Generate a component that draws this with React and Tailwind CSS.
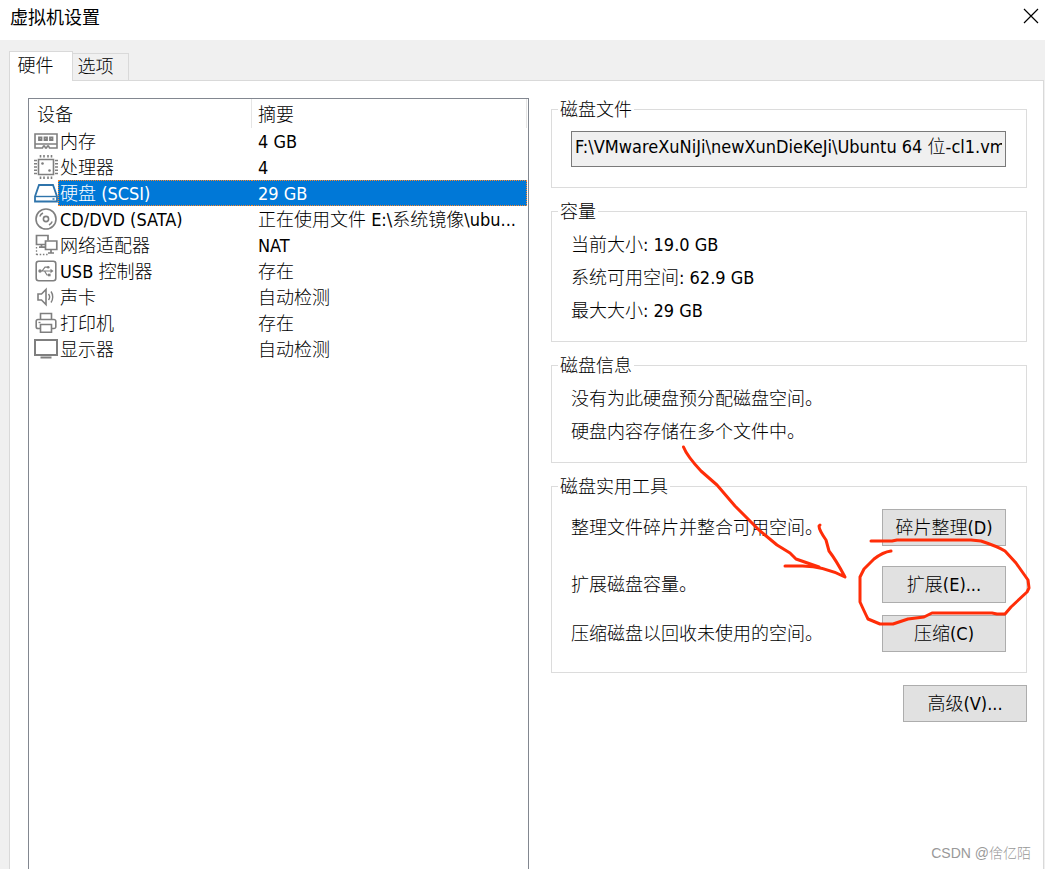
import React from 'react';

function DeviceIcon({ name }) {
  const icons = {
    memory: (
      <g stroke="#7f7f7f" strokeWidth="2">
        <path d="M1 5h22v14h-7.500l-1-2h-1l-1 2h-1l-1-2h-1l-1 2H1z" strokeWidth="1.600" />
        <path d="M1 15h22" strokeWidth="1.500" />
        <path d="M5 8.500h2.500V11H5zM10.500 8.500H13V11h-2.500zM16 8.500h2.500V11H16z" strokeWidth="1.800" />
      </g>
    ),
    cpu: (
      <g stroke="#7f7f7f">
        <path d="M4.500 4.500h15v15h-15z" strokeWidth="1.600" />
        <path d="M6.500 0v2.500M10 0v2.500M14 0v2.500M17.500 0v2.500M6.500 21.500V24M10 21.500V24M14 21.500V24M17.500 21.500V24" strokeWidth="1.600" />
        <path d="M0 5.500h3M0 8.800h3M0 12h3M0 15.200h3M0 18.500h3M21 5.500h3M21 8.800h3M21 12h3M21 15.200h3M21 18.500h3" strokeWidth="1.400" />
        <circle cx="8.500" cy="8.500" r="1.300" fill="#7f7f7f" stroke="none" />
        <circle cx="15.500" cy="15.500" r="1.300" fill="#7f7f7f" stroke="none" />
      </g>
    ),
    disk: (
      <g stroke="#2f74ab" strokeWidth="1.800">
        <path d="M5 4h14l4 11.500v5H1v-5z" />
        <path d="M1 15.500h22" strokeWidth="1.400" />
        <path d="M18.500 18h2" strokeWidth="1.500" />
      </g>
    ),
    disc: (
      <g stroke="#7f7f7f" strokeWidth="1.600">
        <circle cx="12" cy="12" r="10" />
        <circle cx="12" cy="12" r="2.600" />
        <path d="M5.800 9.500a6.600 6.600 0 0 1 3.200-3.500M18.200 14.500a6.600 6.600 0 0 1-3.200 3.500" strokeWidth="1.500" />
      </g>
    ),
    network: (
      <g stroke="#7f7f7f" strokeWidth="1.700">
        <path d="M11 11.500H2.500V2.500h11.500v5" />
        <path d="M7.500 11.500V14M5 14.200h6" />
        <path d="M11.500 8h11.300v8.500H11.500zM17 16.500v3M14 20h6" />
        <path d="M2.500 14v8M2.500 21.500H15" strokeWidth="1.300" strokeDasharray="1.500 1.700" />
      </g>
    ),
    usb: (
      <g stroke="#7f7f7f" strokeWidth="1.600">
        <rect x="2.200" y="2.200" width="19.600" height="19.600" rx="2.500" />
        <path d="M5.500 12H17M8 12l3-3.800h2.500M10.500 12l2.500 4h2" strokeWidth="1.200" />
        <path d="M16.500 9.800l3 2.200-3 2.200z" fill="#7f7f7f" stroke="none" />
        <circle cx="6" cy="12" r="1.700" fill="#7f7f7f" stroke="none" />
        <circle cx="14.200" cy="8.200" r="1.300" fill="#7f7f7f" stroke="none" />
        <path d="M14 14.700h2.600v2.600H14z" fill="#7f7f7f" stroke="none" />
      </g>
    ),
    sound: (
      <g stroke="#7f7f7f" strokeWidth="1.600">
        <path d="M4 9h3.500L12 4.500v15L7.500 15H4z" />
        <path d="M14.500 9c1.300 1.700 1.300 4.300 0 6M17 6.500c2.300 3 2.300 8 0 11" strokeWidth="1.400" />
      </g>
    ),
    printer: (
      <g stroke="#7f7f7f" strokeWidth="1.600">
        <path d="M6.500 8.500v-6h11v6" />
        <path d="M6.500 17.500H4a1.800 1.800 0 0 1-1.800-1.800v-5.400A1.800 1.800 0 0 1 4 8.500h16a1.800 1.800 0 0 1 1.800 1.800v5.400a1.800 1.800 0 0 1-1.800 1.800h-2.500" />
        <path d="M6.500 13.500h11v7.700h-11z" />
        <path d="M4.500 11.500h2" strokeWidth="1.300" />
      </g>
    ),
    display: (
      <g stroke="#7f7f7f" strokeWidth="2">
        <path d="M1 3h22v15H1z" />
        <path d="M6.500 20.500h11" />
      </g>
    ),
  };

  return (
    <svg viewBox="0 0 24 24" className="ml-[5px] block h-6 w-6" fill="none" aria-hidden="true">
      {icons[name]}
    </svg>
  );
}

const devices = [
  { icon: 'memory', name: '内存', summary: '4 GB' },
  { icon: 'cpu', name: '处理器', summary: '4' },
  { icon: 'disk', name: '硬盘 (SCSI)', summary: '29 GB', selected: true },
  { icon: 'disc', name: 'CD/DVD (SATA)', summary: '正在使用文件 E:\\系统镜像\\ubu...' },
  { icon: 'network', name: '网络适配器', summary: 'NAT' },
  { icon: 'usb', name: 'USB 控制器', summary: '存在' },
  { icon: 'sound', name: '声卡', summary: '自动检测' },
  { icon: 'printer', name: '打印机', summary: '存在' },
  { icon: 'display', name: '显示器', summary: '自动检测' },
];

function DeviceList() {
  return (
    <div className="mt-px min-w-0 flex-[500] border border-b-0 border-[#828790] pr-px">
      <table className="w-full table-fixed border-separate border-spacing-0 text-left leading-[22px]">
        <colgroup>
          <col className="w-[29px]" />
          <col className="w-[194px]" />
          <col />
        </colgroup>
        <thead>
          <tr className="h-[29px]">
            <th colSpan={2} className="border-r border-[#e5e5e5] pt-[3px] pl-2 font-light">设备</th>
            <th className="border-r border-[#e5e5e5] pt-[3px] pl-[6px] font-light">摘要</th>
          </tr>
        </thead>
        <tbody>
          {devices.map((d) => (
            <tr key={d.name} className="h-[26px] whitespace-nowrap" aria-selected={!!d.selected}>
              <td>
                <DeviceIcon name={d.icon} />
              </td>
              <td className={d.selected ? 'border-y border-l border-dotted border-[#ff8728] bg-[#0078d7] pt-[2px] pl-px text-white' : 'pt-[2px] pl-[2px]'}>
                {d.name}
              </td>
              <td className={d.selected ? 'border-y border-r border-dotted border-[#ff8728] bg-[#0078d7] pt-[2px] pl-[6px] text-white' : 'pt-[2px] pl-[6px]'}>
                {d.summary}
              </td>
            </tr>
          ))}
        </tbody>
      </table>
    </div>
  );
}

function Group({ title, className, children }) {
  return (
    <fieldset className={`border border-[#dcdcdc] pr-5 pl-[19px] ${className}`}>
      <legend className="-ml-[13px] px-[2px] pt-[2px] leading-[22px]">{title}</legend>
      {children}
    </fieldset>
  );
}

function PushButton({ children, ...props }) {
  return (
    <button
      type="button"
      className="h-[37px] w-[124px] shrink-0 border border-[#adadad] bg-[#e1e1e1] hover:border-[#0078d7] hover:bg-[#e5f1fb]"
      {...props}
    >
      {children}
    </button>
  );
}

// hand-drawn arrow and circle around the expand button
function Markup() {
  return (
    <svg
      viewBox="680 440 355 190"
      className="pointer-events-none absolute -top-[58px] -right-2 h-[190px] w-[355px]"
      fill="none"
      stroke="#ff2d08"
      strokeWidth="3"
      strokeLinecap="round"
      strokeLinejoin="round"
      aria-hidden="true"
    >
      <path d="M684.500 447Q688 456 702 471L718 485L736 506L760 530L778 545L791 553L797 559L820 567" />
      <path d="M786 566H800Q823 565 846 577Q837 560 830 551L827 540Q820 530 820 526L821 525" />
      <path d="M872 541H893L898 540H972L982 541Q1000 547 1006 551L1017 563L1029 580L1030 588L1028 592L1012 607L1006 614H998L993 613H933L925 617L909 619L894 624H881L869 619Q866 613 861 602V577L865 569L875 559Q884 552 892 551" />
    </svg>
  );
}

export default function App() {
  return (
    <div className="flex min-h-screen flex-col bg-[#f0f0f0] font-['DejaVu_Sans_Condensed','Noto_Sans_CJK_SC',sans-serif] text-[18px] leading-6 font-light text-black">
      <header className="flex h-10 shrink-0 items-center justify-between bg-white pr-1 pb-2 pl-[10px]">
        <h1 className="font-['Noto_Sans_CJK_SC',sans-serif] font-normal">虚拟机设置</h1>
        <button type="button" aria-label="关闭" className="flex h-5 w-5 items-center justify-center">
          <svg viewBox="0 0 16 16" className="h-4 w-4" stroke="#000" strokeWidth="1.200" aria-hidden="true">
            <path d="M1 1l14 14M15 1L1 15" />
          </svg>
        </button>
      </header>

      <div className="flex flex-1 flex-col pt-[11px] pr-px pl-[9px]">
        {/* Tabs */}
        <div role="tablist" className="flex h-[29px] items-end">
          <button
            type="button"
            role="tab"
            aria-selected="true"
            className="z-10 -mb-px h-[30px] w-[64px] border border-b-0 border-[#d9d9d9] bg-white pr-[11px] pb-px"
          >
            硬件
          </button>
          <button
            type="button"
            role="tab"
            aria-selected="false"
            className="-ml-px h-[27px] w-[57px] border border-b-0 border-[#d9d9d9] pr-[10px]"
          >
            选项
          </button>
        </div>

        {/* Hardware page */}
        <div role="tabpanel" className="relative flex flex-1 gap-[22px] border border-b-0 border-[#d9d9d9] bg-white pt-[16px] pr-4 pl-[18px]">
          <DeviceList />

          <div className="min-w-0 flex-[478]">
            <Group title="磁盘文件" className="pt-[10px] pb-5">
              <input
                type="text"
                readOnly
                aria-label="磁盘文件"
                value={'F:\\VMwareXuNiJi\\newXunDieKeJi\\Ubuntu 64 位-cl1.vm'}
                className="block h-9 w-full border border-[#7a7a7a] bg-[#f0f0f0] px-[3px] pb-[9px] outline-none"
              />
            </Group>

            <Group title="容量" className="mt-[11px] pt-[5px] pb-[14px] leading-[33px]">
              <p>当前大小: 19.0 GB</p>
              <p>系统可用空间: 62.9 GB</p>
              <p>最大大小: 29 GB</p>
            </Group>

            <Group title="磁盘信息" className="mt-[11px] pt-[5px] pb-[14px] leading-[33px]">
              <p>没有为此硬盘预分配磁盘空间。</p>
              <p>硬盘内容存储在多个文件中。</p>
            </Group>

            <Group title="磁盘实用工具" className="relative mt-[11px] pt-[11px] pb-5">
              <div className="flex items-center justify-between">
                <span id="defrag">整理文件碎片并整合可用空间。</span>
                <PushButton aria-describedby="defrag">碎片整理(D)</PushButton>
              </div>
              <div className="mt-5 flex items-center justify-between">
                <span id="expand">扩展磁盘容量。</span>
                <PushButton aria-describedby="expand">扩展(E)...</PushButton>
              </div>
              <div className="mt-3 flex items-center justify-between">
                <span id="compact">压缩磁盘以回收未使用的空间。</span>
                <PushButton aria-describedby="compact">压缩(C)</PushButton>
              </div>
              <Markup />
            </Group>

            <div className="mt-3 flex justify-end">
              <PushButton>高级(V)...</PushButton>
            </div>
          </div>

          <span className="absolute right-3 bottom-1 font-['Liberation_Sans','Noto_Sans_CJK_SC',sans-serif] text-[14px] text-[#999999]">
            CSDN @倽亿陌
          </span>
        </div>
      </div>
    </div>
  );
}
